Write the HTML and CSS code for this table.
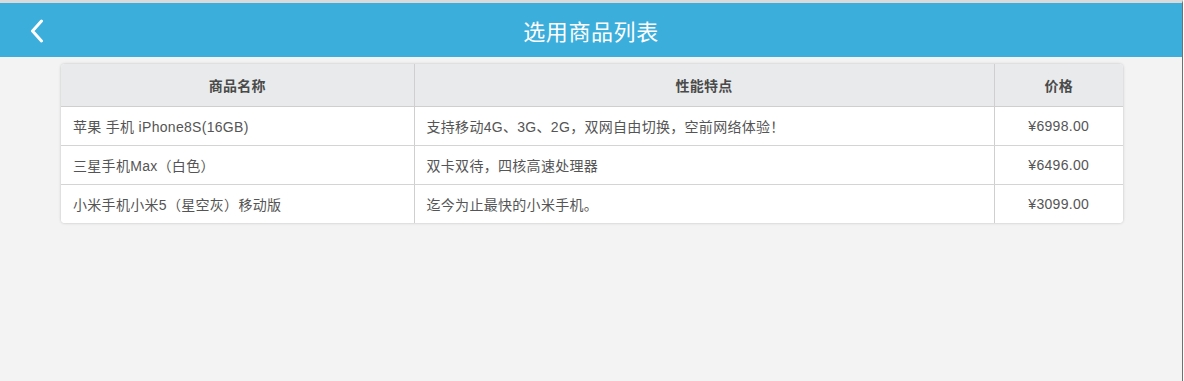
FILE: index.html
```html
<!DOCTYPE html>
<html lang="zh-CN">
<head>
<meta charset="utf-8">
<title>选用商品列表</title>
<link rel="stylesheet" href="styles.css">
</head>
<body>
<div class="frame">
  <header class="bar">
    <a class="back" href="#" aria-label="返回">
      <svg width="14" height="24" viewBox="0 0 14 24"><polyline points="11.5,2 2.5,12 11.5,22" fill="none" stroke="#fff" stroke-width="3" stroke-linecap="round" stroke-linejoin="round"/></svg>
    </a>
    <h1 class="title">选用商品列表</h1>
  </header>
  <main class="content">
    <div class="card">
      <table class="goods">
        <colgroup>
          <col class="c-name"><col class="c-feat"><col class="c-price">
        </colgroup>
        <thead>
          <tr><th>商品名称</th><th>性能特点</th><th>价格</th></tr>
        </thead>
        <tbody>
          <tr><td>苹果 手机 iPhone8S(16GB)</td><td>支持移动4G、3G、2G，双网自由切换，空前网络体验！</td><td class="price">¥6998.00</td></tr>
          <tr><td>三星手机Max（白色）</td><td>双卡双待，四核高速处理器</td><td class="price">¥6496.00</td></tr>
          <tr><td>小米手机小米5（星空灰）移动版</td><td>迄今为止最快的小米手机。</td><td class="price">¥3099.00</td></tr>
        </tbody>
      </table>
    </div>
  </main>
</div>
</body>
</html>
```
FILE: styles.css
```css
html, body {
  margin: 0;
  padding: 0;
  background: #fbfbfb;
}
body {
  font-family: "Liberation Sans", "Noto Sans CJK SC", sans-serif;
  color: #555;
}
.frame {
  width: 1182px;
  height: 378px;
  border-top: 3px solid #dadada;
  border-right: 1px solid #707070;
  background: #f3f3f3;
  display: flex;
  flex-direction: column;
}
.bar {
  height: 54px;
  background: #3caedc;
  display: flex;
  align-items: center;
  justify-content: center;
  position: relative;
}
.back {
  position: absolute;
  left: 30px;
  top: 16px;
  display: block;
  width: 14px;
  height: 24px;
}
.back svg { display: block; }
.title {
  margin: 0;
  font-size: 22px;
  font-weight: normal;
  color: #fff;
  letter-spacing: 0.6px;
  font-family: "Noto Sans CJK SC", sans-serif;
}
.content {
  padding: 7px 0 0 61px;
}
.card {
  width: 1062px;
  background: #fff;
  border-radius: 4px;
  overflow: hidden;
  box-shadow: 0 0 3px rgba(0,0,0,0.22);
}
.goods {
  width: 100%;
  border-collapse: collapse;
  table-layout: fixed;
  font-size: 14px;
  letter-spacing: 0.3px;
}
.c-name { width: 353px; }
.c-feat { width: 580px; }
.c-price { width: 129px; }
.goods th {
  height: 42px;
  padding: 0;
  background: #e9eaec;
  font-weight: bold;
  color: #4a4a4a;
  border-bottom: 1px solid #cfcfcf;
  text-align: center;
}
.goods th + th,
.goods td + td {
  border-left: 1px solid #cfcfcf;
}
.goods td {
  height: 38px;
  padding: 0 12px;
  border-bottom: 1px solid #d4d4d4;
  color: #555;
  background: #fff;
}
.goods tbody tr:last-child td {
  border-bottom: none;
}
.goods td.price {
  text-align: center;
  padding: 0;
}
```
